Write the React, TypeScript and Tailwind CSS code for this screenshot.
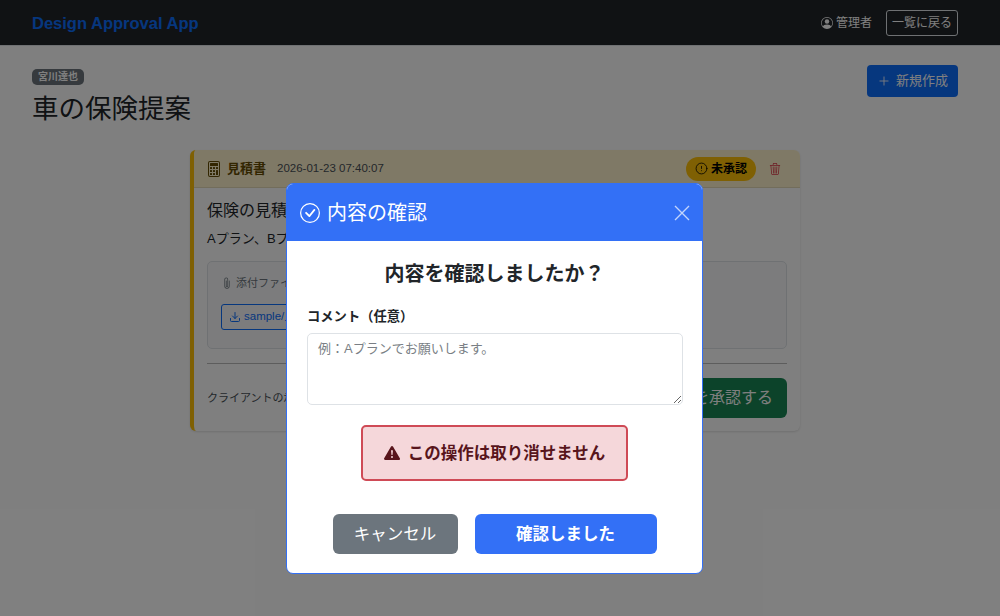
import { AlertCircle, Download, Plus } from "lucide-react";

const font = "font-['Liberation_Sans','Noto_Sans_CJK_JP',sans-serif]";

function UserIcon() {
  return (
    <svg viewBox="0 0 16 16" className="w-3 h-3" fill="currentColor">
      <path d="M11 6a3 3 0 1 1-6 0 3 3 0 0 1 6 0" />
      <path fillRule="evenodd" d="M0 8a8 8 0 1 1 16 0A8 8 0 0 1 0 8m8-7a7 7 0 0 0-5.468 11.37C3.242 11.226 4.805 10 8 10s4.757 1.225 5.468 2.37A7 7 0 0 0 8 1" />
    </svg>
  );
}

function CheckCircle() {
  return (
    <svg viewBox="0 0 16 16" className="w-5 h-5" fill="currentColor">
      <path d="M8 15A7 7 0 1 1 8 1a7 7 0 0 1 0 14m0 1A8 8 0 1 0 8 0a8 8 0 0 0 0 16" />
      <path d="m10.97 4.97-.02.022-3.473 4.425-2.093-2.094a.75.75 0 0 0-1.06 1.06L6.97 11.03a.75.75 0 0 0 1.079-.02l3.992-4.99a.75.75 0 0 0-1.071-1.05" />
    </svg>
  );
}

function WarningIcon() {
  return (
    <svg viewBox="0 0 16 16" className="w-4 h-4 shrink-0" fill="currentColor">
      <path d="M8.982 1.566a1.13 1.13 0 0 0-1.96 0L.165 13.233c-.457.778.091 1.767.98 1.767h13.713c.889 0 1.438-.99.98-1.767zM8 5c.535 0 .954.462.9.995l-.35 3.507a.552.552 0 0 1-1.1 0L7.1 5.995A.905.905 0 0 1 8 5m.002 6a1 1 0 1 1 0 2 1 1 0 0 1 0-2" />
    </svg>
  );
}

function CalculatorIcon() {
  return (
    <svg viewBox="0 0 16 16" className="w-4 h-4 shrink-0 text-[#664d03]" fill="currentColor">
      <path d="M12 1a1 1 0 0 1 1 1v12a1 1 0 0 1-1 1H4a1 1 0 0 1-1-1V2a1 1 0 0 1 1-1zM4 0a2 2 0 0 0-2 2v12a2 2 0 0 0 2 2h8a2 2 0 0 0 2-2V2a2 2 0 0 0-2-2z" />
      <path d="M4 2.5a.5.5 0 0 1 .5-.5h7a.5.5 0 0 1 .5.5v2a.5.5 0 0 1-.5.5h-7a.5.5 0 0 1-.5-.5zm0 4a.5.5 0 0 1 .5-.5h1a.5.5 0 0 1 .5.5v1a.5.5 0 0 1-.5.5h-1a.5.5 0 0 1-.5-.5zm0 3a.5.5 0 0 1 .5-.5h1a.5.5 0 0 1 .5.5v1a.5.5 0 0 1-.5.5h-1a.5.5 0 0 1-.5-.5zm0 3a.5.5 0 0 1 .5-.5h1a.5.5 0 0 1 .5.5v1a.5.5 0 0 1-.5.5h-1a.5.5 0 0 1-.5-.5zm3-6a.5.5 0 0 1 .5-.5h1a.5.5 0 0 1 .5.5v1a.5.5 0 0 1-.5.5h-1a.5.5 0 0 1-.5-.5zm0 3a.5.5 0 0 1 .5-.5h1a.5.5 0 0 1 .5.5v1a.5.5 0 0 1-.5.5h-1a.5.5 0 0 1-.5-.5zm0 3a.5.5 0 0 1 .5-.5h1a.5.5 0 0 1 .5.5v1a.5.5 0 0 1-.5.5h-1a.5.5 0 0 1-.5-.5zm3-6a.5.5 0 0 1 .5-.5h1a.5.5 0 0 1 .5.5v1a.5.5 0 0 1-.5.5h-1a.5.5 0 0 1-.5-.5zm0 3a.5.5 0 0 1 .5-.5h1a.5.5 0 0 1 .5.5v4a.5.5 0 0 1-.5.5h-1a.5.5 0 0 1-.5-.5z" />
    </svg>
  );
}

function TrashIcon() {
  return (
    <svg viewBox="0 0 16 16" className="w-3 h-3 ml-[13px] shrink-0 text-[#dc3545]" fill="currentColor">
      <path d="M6.5 1h3a.5.5 0 0 1 .5.5v1H6v-1a.5.5 0 0 1 .5-.5M11 2.5v-1A1.5 1.5 0 0 0 9.5 0h-3A1.5 1.5 0 0 0 5 1.5v1H1.5a.5.5 0 0 0 0 1h.538l.853 10.66A2 2 0 0 0 4.885 16h6.23a2 2 0 0 0 1.994-1.84l.853-10.66h.538a.5.5 0 0 0 0-1zm1.958 1-.846 10.58a1 1 0 0 1-.997.92h-6.23a1 1 0 0 1-.997-.92L3.042 3.5zm-7.487 1a.5.5 0 0 1 .528.47l.5 8.5a.5.5 0 0 1-.998.06L5 5.03a.5.5 0 0 1 .47-.53Zm5.058 0a.5.5 0 0 1 .47.53l-.5 8.5a.5.5 0 1 1-.998-.06l.5-8.5a.5.5 0 0 1 .528-.47M8 4.5a.5.5 0 0 1 .5.5v8.5a.5.5 0 0 1-1 0V5a.5.5 0 0 1 .5-.5" />
    </svg>
  );
}

function PaperclipIcon() {
  return (
    <svg viewBox="0 0 16 16" className="w-3 h-3 shrink-0" fill="currentColor">
      <path d="M4.5 3a2.5 2.5 0 0 1 5 0v9a1.5 1.5 0 0 1-3 0V5a.5.5 0 0 1 1 0v7a.5.5 0 0 0 1 0V3a1.5 1.5 0 1 0-3 0v9a2.5 2.5 0 0 0 5 0V5a.5.5 0 0 1 1 0v7a3.5 3.5 0 1 1-7 0z" />
    </svg>
  );
}

function CloseIcon() {
  return (
    <svg viewBox="0 0 16 16" className="w-4 h-4 ml-auto text-white/70" fill="none" stroke="currentColor" strokeWidth="1.4">
      <path d="M1 1l14 14M15 1L1 15" />
    </svg>
  );
}

export default function App() {
  return (
    <div className={`relative h-[616px] overflow-hidden bg-white text-[#212529] ${font}`}>
      {/* Navbar */}
      <nav className="h-[46px] bg-[#212529] border-b border-[#dee2e6] flex items-center justify-between pl-8 pr-[42px]">
        <span className="pt-[1px] text-[16.5px] font-bold text-[#0d6efd]">Design Approval App</span>
        <div className="flex items-center gap-[14px]">
          <span className="flex items-center gap-[3px] text-[12px] text-white">
            <UserIcon />
            管理者
          </span>
          <button className="h-[26px] w-[72px] rounded-[3px] border border-[#dee2e6] text-[12px] text-white">一覧に戻る</button>
        </div>
      </nav>

      {/* Page heading */}
      <div className="flex justify-between pl-8 pr-[42px] pt-[23px]">
        <div>
          <span className="block w-[52px] h-4 rounded-[5px] bg-[#6c757d] text-white text-[10px] font-bold leading-4 text-center">宮川達也</span>
          <h1 className="mt-[6px] text-[26.5px] leading-[36px] font-normal">車の保険提案</h1>
        </div>
        <button className="mt-[-4px] h-[32px] w-[91px] rounded-[4px] bg-[#0d6efd] text-white text-[13px] flex items-center justify-center gap-[5px]">
          <Plus size={14} strokeWidth={1.5} />
          新規作成
        </button>
      </div>

      {/* Card */}
      <div className="mt-[23px] ml-[190px] w-[610px] h-[281px] rounded-[6px] border-l-4 border-[#ffc107] bg-white shadow-sm overflow-hidden">
        <div className="h-[38px] bg-[#fff3cd] border-b border-black/10 flex items-center pl-3 pr-[19px]">
          <CalculatorIcon />
          <span className="ml-[5px] text-[13px] font-bold text-[#664d03]">見積書</span>
          <span className="ml-[11px] text-[11.5px] text-[#495057]">2026-01-23 07:40:07</span>
          <span className="ml-auto h-6 w-[70px] rounded-full bg-[#ffc107] text-[12px] font-bold text-black flex items-center justify-center gap-[3px]">
            <AlertCircle size={13} strokeWidth={1.5} />
            未承認
          </span>
          <TrashIcon />
        </div>
        <div className="px-[13px] pt-[13px]">
          <h2 className="text-[16px] leading-[20px] font-normal">保険の見積もりをお送りします</h2>
          <p className="mt-[8px] text-[13px] leading-[20px]">Aプラン、Bプランをご確認ください。</p>
          <div className="mt-[12px] h-[88px] rounded-[5px] border border-[#dee2e6] bg-[#f8f9fa] pl-[13px] pt-[13px]">
            <div className="flex items-center gap-[3px] text-[11px] text-[#6c757d]">
              <PaperclipIcon />
              添付ファイル
            </div>
            <button className="mt-[12px] h-[26px] px-[7px] rounded-[3px] border border-[#0d6efd] text-[#0d6efd] text-[11.5px] flex items-center gap-[3px]">
              <Download size={12} />
              sample/見積書.pdf
            </button>
          </div>
          <div className="mt-[14px] border-t border-[#bbbbbb]" />
          <div className="mt-[14px] flex items-center justify-between">
            <span className="text-[11px] text-[#495057]">クライアントの承認をお待ちしています</span>
            <button className="h-10 w-[180px] pr-[14px] rounded-[6px] bg-[#198754] text-white text-[16px] flex items-center justify-end">内容を承認する</button>
          </div>
        </div>
      </div>

      {/* Backdrop */}
      <div className="absolute inset-0 bg-black/50" />

      {/* Modal */}
      <div className="absolute left-[286px] top-[183px] w-[417px] h-[391px] rounded-[7px] border border-[#3370f6] bg-white overflow-hidden flex flex-col">
        <div className="h-[57px] shrink-0 bg-[#3370f6] text-white flex items-center pl-[13px] pr-[12px]">
          <CheckCircle />
          <span className="ml-[7px] text-[20px]">内容の確認</span>
          <CloseIcon />
        </div>
        <div className="flex flex-col px-5 pt-[20px]">
          <h3 className="text-center text-[20px] leading-[26px] font-bold">内容を確認しましたか？</h3>
          <label className="mt-[20px] text-[13.3px] leading-[20px] font-bold">コメント（任意）</label>
          <textarea
            readOnly
            className="mt-[6px] w-[376px] h-[72px] rounded-[5px] border border-[#dee2e6] px-[10px] py-[6px] text-[13px] leading-[18px] placeholder:text-[#7a7f85] outline-none"
            placeholder="例：Aプランでお願いします。"
          />
          <div className="mt-[20px] self-center w-[267px] h-[56px] rounded-[5px] border-2 border-[#cf4a56] bg-[#f5d7da] text-[#58151c] flex items-center justify-center gap-2 text-[16.5px] font-bold">
            <WarningIcon />
            この操作は取り消せません
          </div>
          <div className="mt-[33px] flex justify-center gap-[17px]">
            <button className="w-[125px] h-10 rounded-[6px] bg-[#6c757d] text-white text-[16.5px]">キャンセル</button>
            <button className="w-[182px] h-10 rounded-[6px] bg-[#3370f6] text-white text-[16.5px] font-bold">確認しました</button>
          </div>
        </div>
      </div>
    </div>
  );
}
